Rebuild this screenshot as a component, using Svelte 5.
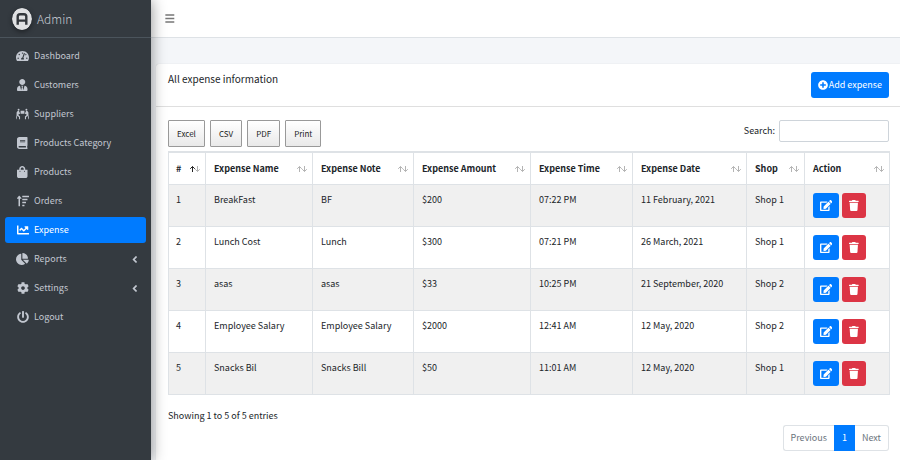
<script lang="ts">
	type Icon = { w: number; d: string };

	const icons: Record<string, Icon> = {
		dashboard: {
			w: 576,
			d: 'M288 32C128.94 32 0 160.94 0 320c0 52.8 14.25 102.26 39.06 144.8 5.61 9.62 16.3 15.2 27.44 15.2h443c11.14 0 21.83-5.58 27.44-15.2C561.75 422.26 576 372.8 576 320c0-159.06-128.94-288-288-288zm0 64c14.71 0 26.58 10.13 30.32 23.65-1.11 2.26-2.64 4.23-3.45 6.67l-9.22 27.67c-5.13 3.49-10.97 6.01-17.64 6.01-17.67 0-32-14.33-32-32S270.33 96 288 96zM96 384c-17.67 0-32-14.33-32-32s14.33-32 32-32 32 14.33 32 32-14.33 32-32 32zm48-160c-17.67 0-32-14.33-32-32s14.33-32 32-32 32 14.33 32 32-14.33 32-32 32zm246.77-72.41l-61.33 184C343.13 347.33 352 364.54 352 384c0 11.72-3.38 22.55-8.88 32H232.88c-5.5-9.45-8.88-20.28-8.88-32 0-33.94 26.5-61.43 59.9-63.59l61.34-184.01c4.17-12.56 17.73-19.45 30.36-15.17 12.57 4.19 19.35 17.79 15.17 30.36zm14.66 57.2l15.52-46.55c3.47-1.29 7.13-2.23 11.05-2.23 17.67 0 32 14.33 32 32s-14.33 32-32 32c-11.38-.01-20.89-6.28-26.57-15.22zM480 384c-17.67 0-32-14.33-32-32s14.33-32 32-32 32 14.33 32 32-14.33 32-32 32z'
		},
		customers: {
			w: 448,
			d: 'M224 256c70.7 0 128-57.3 128-128S294.7 0 224 0 96 57.3 96 128s57.3 128 128 128zm95.8 32.6L272 480l-32-136 32-56h-96l32 56-32 136-47.8-191.4C56.9 292 0 350.3 0 422.4V464c0 26.5 21.5 48 48 48h352c26.5 0 48-21.5 48-48v-41.6c0-72.1-56.9-130.4-128.2-133.8z'
		},
		suppliers: {
			w: 640,
			d: 'M128 0a48 48 0 1 0 0 96 48 48 0 0 0 0-96zM512 0a48 48 0 1 0 0 96 48 48 0 0 0 0-96zM224 96h192v144H224zM80 112h64l48 96v48h-56l-8-16v80l72 64v128h-52v-96l-80-72L20 512H0v-60l28-132V180zM560 112h-64l-48 96v48h56l8-16v80l-72 64v128h52v-96l80-72 48 168h20v-60l-28-132V180z'
		},
		category: {
			w: 448,
			d: 'M448 360V24c0-13.3-10.7-24-24-24H96C43 0 0 43 0 96v320c0 53 43 96 96 96h328c13.3 0 24-10.7 24-24v-16c0-7.5-3.5-14.3-8.9-18.7-4.2-15.4-4.2-59.3 0-74.7 5.4-4.3 8.9-11.1 8.9-18.6zM128 134c0-3.3 2.7-6 6-6h212c3.3 0 6 2.7 6 6v20c0 3.3-2.7 6-6 6H134c-3.3 0-6-2.7-6-6v-20zm0 64c0-3.3 2.7-6 6-6h212c3.3 0 6 2.7 6 6v20c0 3.3-2.7 6-6 6H134c-3.3 0-6-2.7-6-6v-20zm253.4 250H96c-17.7 0-32-14.3-32-32 0-17.6 14.4-32 32-32h285.4c-1.9 17.1-1.9 46.9 0 64z'
		},
		products: {
			w: 448,
			d: 'M352 160v-32C352 57.42 294.579 0 224 0 153.42 0 96 57.42 96 128v32H0v272c0 44.183 35.817 80 80 80h288c44.183 0 80-35.817 80-80V160h-96zm-192-32c0-35.29 28.71-64 64-64s64 28.71 64 64v32H160v-32zm160 120c-13.255 0-24-10.745-24-24s10.745-24 24-24 24 10.745 24 24-10.745 24-24 24zm-192 0c-13.255 0-24-10.745-24-24s10.745-24 24-24 24 10.745 24 24-10.745 24-24 24z'
		},
		orders: {
			w: 512,
			d: 'M16 160h48v304c0 9 7 16 16 16h32c9 0 16-7 16-16V160h48c14 0 21-17 11-27l-80-96c-6-7-16-7-22 0L5 133c-10 10-3 27 11 27zM240 32h256c9 0 16 7 16 16v32c0 9-7 16-16 16H240c-9 0-16-7-16-16V48c0-9 7-16 16-16zM240 160h192c9 0 16 7 16 16v32c0 9-7 16-16 16H240c-9 0-16-7-16-16v-32c0-9 7-16 16-16zM240 288h128c9 0 16 7 16 16v32c0 9-7 16-16 16H240c-9 0-16-7-16-16v-32c0-9 7-16 16-16zM240 416h64c9 0 16 7 16 16v32c0 9-7 16-16 16h-64c-9 0-16-7-16-16v-32c0-9 7-16 16-16z'
		},
		expense: {
			w: 512,
			d: 'M496 384H64V80c0-8.84-7.16-16-16-16H16C7.16 64 0 71.16 0 80v336c0 17.67 14.33 32 32 32h464c8.84 0 16-7.16 16-16v-32c0-8.84-7.16-16-16-16zM464 96H345.94c-21.38 0-32.09 25.85-16.97 40.97l32.4 32.4L288 242.75l-73.37-73.37c-12.5-12.5-32.76-12.5-45.25 0l-68.69 68.69c-6.25 6.25-6.25 16.38 0 22.63l22.62 22.62c6.25 6.25 16.38 6.25 22.63 0L192 237.25l73.37 73.37c12.5 12.5 32.76 12.5 45.25 0l96-96 32.4 32.4c15.12 15.12 40.97 4.41 40.97-16.97V112c.01-8.84-7.15-16-15.99-16z'
		},
		reports: {
			w: 544,
			d: 'M527.79 288H290.5l158.03 158.03c6.04 6.04 15.98 6.53 22.19.68 38.7-36.46 65.32-85.61 73.13-140.86 1.34-9.46-6.51-17.85-16.06-17.85zm-15.83-64.8C503.72 103.74 408.26 8.28 288.8.04 279.68-.59 272 7.1 272 16.24V240h223.77c9.14 0 16.82-7.68 16.19-16.8zM224 288V50.71c0-9.55-8.39-17.4-17.84-16.06C86.99 51.49-4.1 155.6.14 280.37 4.5 408.51 114.83 513.59 243.03 511.98c50.4-.63 96.97-16.87 135.26-44.03 7.9-5.6 8.42-17.23 1.57-24.08L224 288z'
		},
		settings: {
			w: 512,
			d: 'M487.4 315.7l-42.6-24.6c4.3-23.2 4.3-47 0-70.2l42.6-24.6c4.9-2.8 7.1-8.6 5.5-14-11.1-35.6-30-67.8-54.7-94.6-3.8-4.1-10-5.1-14.8-2.3L380.8 110c-17.9-15.4-38.5-27.3-60.8-35.1V25.8c0-5.6-3.9-10.5-9.4-11.7-36.7-8.2-74.3-7.8-109.2 0-5.5 1.2-9.4 6.1-9.4 11.7V75c-22.2 7.9-42.8 19.8-60.8 35.1L88.7 85.5c-4.9-2.8-11-1.9-14.8 2.3-24.7 26.7-43.6 58.9-54.7 94.6-1.7 5.4.6 11.2 5.5 14L67.3 221c-4.3 23.2-4.3 47 0 70.2l-42.6 24.6c-4.9 2.8-7.1 8.6-5.5 14 11.1 35.6 30 67.8 54.7 94.6 3.8 4.1 10 5.1 14.8 2.3l42.6-24.6c17.9 15.4 38.5 27.3 60.8 35.1v49.2c0 5.6 3.9 10.5 9.4 11.7 36.7 8.2 74.3 7.8 109.2 0 5.5-1.2 9.4-6.1 9.4-11.7v-49.2c22.2-7.9 42.8-19.8 60.8-35.1l42.6 24.6c4.9 2.8 11 1.9 14.8-2.3 24.7-26.7 43.6-58.9 54.7-94.6 1.5-5.5-.7-11.3-5.6-14.1zM256 336c-44.1 0-80-35.9-80-80s35.9-80 80-80 80 35.9 80 80-35.9 80-80 80z'
		},
		logout: {
			w: 512,
			d: 'M400 54.1c63 45 104 118.6 104 201.9 0 136.8-110.8 247.7-247.5 248C120 504.3 8.2 393 8 256.4 7.9 173.1 48.9 99.3 111.8 54.2c11.7-8.3 28-4.8 35 7.7L162.6 90c5.9 10.5 3.1 23.8-6.6 31-41.5 30.8-68 79.6-68 134.9-.1 92.3 74.5 168.1 168 168.1 91.6 0 168.6-74.2 168-169.1-.3-51.8-24.7-101.8-68.1-134-9.7-7.2-12.4-20.5-6.5-30.9l15.8-28.1c7-12.4 23.2-16.1 34.8-7.8zM296 264V24c0-13.3-10.7-24-24-24h-32c-13.3 0-24 10.7-24 24v240c0 13.3 10.7 24 24 24h32c13.3 0 24-10.7 24-24z'
		},
		angle: {
			w: 256,
			d: 'M31.7 239l136-136c9.4-9.4 24.6-9.4 33.9 0l22.6 22.6c9.4 9.4 9.4 24.6 0 33.9L127.9 256l96.4 96.4c9.4 9.4 9.4 24.6 0 33.9L201.7 409c-9.4 9.4-24.6 9.4-33.9 0l-136-136c-9.5-9.4-9.5-24.6-.1-34z'
		},
		bars: {
			w: 448,
			d: 'M16 60h416v64H16zM16 224h416v64H16zM16 388h416v64H16z'
		},
		plus: {
			w: 512,
			d: 'M256 8C119 8 8 119 8 256s111 248 248 248 248-111 248-248S393 8 256 8zm144 276c0 6.6-5.4 12-12 12h-92v92c0 6.6-5.4 12-12 12h-56c-6.6 0-12-5.4-12-12v-92h-92c-6.6 0-12-5.4-12-12v-56c0-6.6 5.4-12 12-12h92v-92c0-6.6 5.4-12 12-12h56c6.6 0 12 5.4 12 12v92h92c6.6 0 12 5.4 12 12v56z'
		},
		edit: {
			w: 576,
			d: 'M402.6 83.2l90.2 90.2c3.8 3.8 3.8 10 0 13.8L274.4 405.6l-92.8 10.3c-12.4 1.4-22.9-9.1-21.5-21.5l10.3-92.8L388.8 83.2c3.8-3.8 10-3.8 13.8 0zm162-22.9l-48.8-48.8c-15.2-15.2-39.9-15.2-55.2 0l-35.4 35.4c-3.8 3.8-3.8 10 0 13.8l90.2 90.2c3.8 3.8 10 3.8 13.8 0l35.4-35.4c15.2-15.3 15.2-40 0-55.2zM384 346.2V448H64V128h229.8c3.2 0 6.2-1.3 8.5-3.5l40-40c7.6-7.6 2.2-20.5-8.5-20.5H48C21.5 64 0 85.5 0 112v352c0 26.5 21.5 48 48 48h352c26.5 0 48-21.5 48-48V306.2c0-10.7-12.9-16-20.5-8.5l-40 40c-2.2 2.3-3.5 5.3-3.5 8.5z'
		},
		trash: {
			w: 448,
			d: 'M432 32H312l-9.4-18.7A24 24 0 0 0 281.1 0H166.8a23.72 23.72 0 0 0-21.4 13.3L136 32H16A16 16 0 0 0 0 48v32a16 16 0 0 0 16 16h416a16 16 0 0 0 16-16V48a16 16 0 0 0-16-16zM53.2 467a48 48 0 0 0 47.9 45h245.8a48 48 0 0 0 47.9-45L416 128H32z'
		}
	};

	const menu = [
		{ label: 'Dashboard', icon: 'dashboard' },
		{ label: 'Customers', icon: 'customers' },
		{ label: 'Suppliers', icon: 'suppliers' },
		{ label: 'Products Category', icon: 'category' },
		{ label: 'Products', icon: 'products' },
		{ label: 'Orders', icon: 'orders' },
		{ label: 'Expense', icon: 'expense' },
		{ label: 'Reports', icon: 'reports', sub: true },
		{ label: 'Settings', icon: 'settings', sub: true },
		{ label: 'Logout', icon: 'logout' }
	];

	const exports = ['Excel', 'CSV', 'PDF', 'Print'];

	const columns = [
		{ key: 'id', label: '#' },
		{ key: 'name', label: 'Expense Name' },
		{ key: 'note', label: 'Expense Note' },
		{ key: 'amount', label: 'Expense Amount' },
		{ key: 'time', label: 'Expense Time' },
		{ key: 'date', label: 'Expense Date' },
		{ key: 'shop', label: 'Shop' },
		{ key: 'action', label: 'Action' }
	];

	const expenses = [
		{ id: 1, name: 'BreakFast', note: 'BF', amount: 200, time: '07:22 PM', date: '11 February, 2021', shop: 'Shop 1' },
		{ id: 2, name: 'Lunch Cost', note: 'Lunch', amount: 300, time: '07:21 PM', date: '26 March, 2021', shop: 'Shop 1' },
		{ id: 3, name: 'asas', note: 'asas', amount: 33, time: '10:25 PM', date: '21 September, 2020', shop: 'Shop 2' },
		{ id: 4, name: 'Employee Salary', note: 'Employee Salary', amount: 2000, time: '12:41 AM', date: '12 May, 2020', shop: 'Shop 2' },
		{ id: 5, name: 'Snacks Bil', note: 'Snacks Bill', amount: 50, time: '11:01 AM', date: '12 May, 2020', shop: 'Shop 1' }
	];

	let active = $state('Expense');
	let search = $state('');

	let rows = $derived(
		expenses.filter((e) => Object.values(e).join(' ').toLowerCase().includes(search.toLowerCase()))
	);
</script>

{#snippet icon(name: string)}
	<svg class="icon icon-{name}" viewBox="0 0 {icons[name].w} 512" aria-hidden="true">
		<path d={icons[name].d} />
	</svg>
{/snippet}

<div class="wrapper">
	<aside class="sidebar">
		<a class="brand" href="#home">
			<svg class="logo" viewBox="0 0 20 22" aria-hidden="true">
				<ellipse cx="10" cy="11" rx="10" ry="11" fill="#e0e1e3" />
				<path d="M5.7 16.8V8.6Q5.7 6.3 8 6.3h4q2.3 0 2.3 2.3v8.2M5.7 12.6h8.6" fill="none" stroke="#33373c" stroke-width="2.4" />
			</svg>
			<span>Admin</span>
		</a>
		<nav class="menu">
			{#each menu as item (item.label)}
				<a
					href="#{item.icon}"
					class:active={item.label === active}
					onclick={() => (active = item.label)}
				>
					<span class="menu-icon">{@render icon(item.icon)}</span>
					<span class="menu-label">{item.label}</span>
					{#if item.sub}
						{@render icon('angle')}
					{/if}
				</a>
			{/each}
		</nav>
	</aside>

	<div class="page">
		<header class="topbar">
			<button class="toggle" aria-label="Toggle menu">{@render icon('bars')}</button>
		</header>

		<main class="card">
			<div class="card-header">
				<h1>All expense information</h1>
				<button class="btn btn-primary">{@render icon('plus')} Add expense</button>
			</div>

			<div class="card-body">
				<div class="toolbar">
					<div class="exports">
						{#each exports as label}
							<button>{label}</button>
						{/each}
					</div>
					<label class="search">
						Search:
						<input type="search" bind:value={search} />
					</label>
				</div>

				<table>
					<thead>
						<tr>
							{#each columns as col (col.key)}
								<th class="col-{col.key}">
									<div class="head">
										{col.label}
										<svg class="sort" class:asc={col.key === 'id'} viewBox="0 0 10 8" aria-hidden="true">
											<path class="down" d="M7.5 1v5.5M5.2 4.2l2.3 2.3 2.3-2.3" />
											<path class="up" d="M2.5 7V1.5M.2 3.8l2.3-2.3 2.3 2.3" />
										</svg>
									</div>
								</th>
							{/each}
						</tr>
					</thead>
					<tbody>
						{#each rows as e (e.id)}
							<tr>
								<td>{e.id}</td>
								<td>{e.name}</td>
								<td>{e.note}</td>
								<td>${e.amount}</td>
								<td>{e.time}</td>
								<td>{e.date}</td>
								<td>{e.shop}</td>
								<td>
									<div class="actions">
										<button class="btn btn-primary btn-edit" aria-label="Edit {e.name}">{@render icon('edit')}</button>
										<button class="btn btn-danger" aria-label="Delete {e.name}">{@render icon('trash')}</button>
									</div>
								</td>
							</tr>
						{/each}
					</tbody>
				</table>

				<p class="info">Showing 1 to {rows.length} of {rows.length} entries</p>
				<nav class="pagination" aria-label="Pages">
					<a href="#previous">Previous</a>
					<a class="current" href="#1">1</a>
					<a href="#next">Next</a>
				</nav>
			</div>
		</main>
	</div>
</div>

<style>
	:global(body) {
		margin: 0;
		background: #f4f6f9;
	}

	.wrapper {
		display: grid;
		grid-template-columns: 151px 1fr;
		min-height: 100vh;
		font-family: 'Noto Sans CJK SC', 'Open Sans', sans-serif;
		font-size: 9px;
		line-height: 14px;
		color: #212529;
	}

	.wrapper * {
		box-sizing: border-box;
	}

	button,
	input {
		font: inherit;
	}

	a {
		text-decoration: none;
	}

	.icon {
		display: block;
		height: 11px;
		fill: currentColor;
	}

	.sidebar {
		position: relative;
		background: #343a40;
		box-shadow: 0 0 14px rgba(0, 0, 0, 0.45);
		color: #c2c7d0;
	}

	.brand {
		display: flex;
		align-items: center;
		gap: 5px;
		height: 38px;
		padding: 0 12px;
		border-bottom: 1px solid #4b545c;
		color: #c2c7d0;
		font-size: 12px;
		font-weight: 300;
	}

	.logo {
		width: 20px;
		height: 22px;
		border-radius: 50%;
		box-shadow: 0 2px 5px rgba(0, 0, 0, 0.4);
	}

	.menu {
		display: flex;
		flex-direction: column;
		gap: 3px;
		padding: 5px;
	}

	.menu a {
		display: flex;
		align-items: center;
		gap: 4px;
		height: 26px;
		padding: 0 9px 0 10px;
		border-radius: 3px;
		color: #c2c7d0;
	}

	.menu a.active {
		background: #007bff;
		color: #fff;
	}

	.menu-icon {
		display: flex;
		justify-content: center;
		width: 15px;
	}

	.menu-icon .icon {
		height: 12px;
		max-width: 13px;
	}

	.menu-label {
		flex: 1;
	}

	.page {
		display: flex;
		flex-direction: column;
		min-width: 0;
	}

	.topbar {
		display: flex;
		align-items: center;
		height: 38px;
		padding: 0 14px;
		border-bottom: 1px solid #dee2e6;
		background: #fff;
	}

	.toggle {
		padding: 0;
		border: 0;
		background: none;
		color: #777;
	}

	.card {
		flex: 1;
		margin: 26px 0 0 5px;
		border-radius: 3px 0 0 0;
		background: #fff;
		box-shadow: 0 0 1px rgba(0, 0, 0, 0.2);
	}

	.card-header {
		display: flex;
		align-items: flex-start;
		justify-content: space-between;
		padding: 8px 11px 8px 12px;
		border-bottom: 1px solid #dfdfdf;
	}

	h1 {
		margin: 0;
		font-size: 10px;
		font-weight: 400;
	}

	.btn {
		display: flex;
		align-items: center;
		justify-content: center;
		gap: 1px;
		height: 26px;
		padding: 0 7px;
		border: 0;
		border-radius: 3px;
		color: #fff;
	}

	.btn-primary {
		background: #007bff;
	}

	.btn-danger {
		background: #dc3545;
	}

	.icon-plus {
		height: 10px;
	}

	.card-body {
		padding: 13px 11px 10px 12px;
	}

	.toolbar {
		display: flex;
		align-items: flex-start;
		justify-content: space-between;
		margin-bottom: 4px;
	}

	.exports {
		display: flex;
		gap: 5px;
	}

	.exports button {
		height: 27px;
		padding: 0 8px;
		border: 1px solid #999;
		border-radius: 1px;
		background: linear-gradient(#fff, #e9e9e9);
		color: #222;
		font-size: 8px;
	}

	.search {
		display: flex;
		align-items: center;
		gap: 4px;
	}

	.search input {
		width: 110px;
		height: 22px;
		padding: 0 6px;
		border: 1px solid #ced4da;
		border-radius: 2px;
		background: #fff;
	}

	table {
		width: 100%;
		table-layout: fixed;
		border-collapse: collapse;
	}

	th,
	td {
		border: 1px solid #dee2e6;
		padding: 8px;
		text-align: left;
		vertical-align: top;
	}

	th {
		padding: 9px 5px 8px 8px;
		border-top-width: 2px;
		font-weight: 700;
	}

	th:first-child,
	td:first-child {
		padding-left: 7px;
	}

	tbody tr:nth-child(odd) {
		background: #f0f0f0;
	}

	/* shared out in proportion over the table's full width */
	.col-id {
		width: 37px;
	}

	.col-name {
		width: 107px;
	}

	.col-note {
		width: 101px;
	}

	.col-amount {
		width: 117px;
	}

	.col-time {
		width: 102px;
	}

	.col-date {
		width: 114px;
	}

	.col-shop {
		width: 58px;
	}

	.col-action {
		width: 85px;
	}

	.head {
		display: flex;
		align-items: center;
		justify-content: space-between;
		white-space: nowrap;
	}

	.sort {
		width: 10px;
		height: 8px;
		fill: none;
		stroke: #b4b4b4;
	}

	.sort.asc .up {
		stroke: #222;
	}

	.actions {
		display: flex;
		gap: 3px;
	}

	.actions .btn {
		width: 24px;
		height: 25px;
		padding: 0;
	}

	.actions .btn-edit {
		width: 26px;
	}

	.info {
		margin: 14px 0 2px;
	}

	.pagination {
		display: flex;
		justify-content: flex-end;
	}

	.pagination a {
		padding: 5px 7px;
		border: 1px solid #dee2e6;
		color: #6c757d;
	}

	.pagination a:first-child {
		border-right: 0;
		border-radius: 3px 0 0 3px;
	}

	.pagination a:last-child {
		border-left: 0;
		border-radius: 0 3px 3px 0;
	}

	.pagination .current {
		border-color: #007bff;
		background: #007bff;
		color: #fff;
	}
</style>
